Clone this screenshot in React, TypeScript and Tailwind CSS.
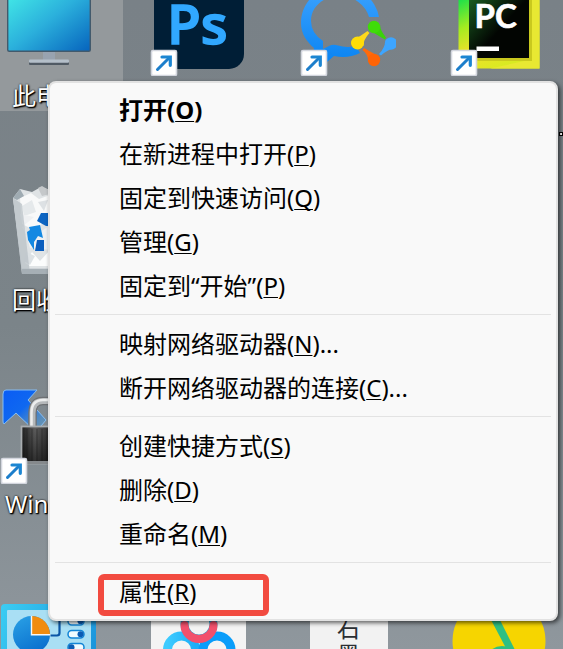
import { ReactNode } from 'react'
import clsx from 'clsx'

interface MenuEntry {
  label: string
  accessKey: string
  suffix?: string
  isDefault?: boolean
  highlighted?: boolean
}

const menuGroups: MenuEntry[][] = [
  [
    { label: '打开', accessKey: 'O', isDefault: true },
    { label: '在新进程中打开', accessKey: 'P' },
    { label: '固定到快速访问', accessKey: 'Q' },
    { label: '管理', accessKey: 'G' },
    { label: '固定到“开始”', accessKey: 'P' },
  ],
  [
    { label: '映射网络驱动器', accessKey: 'N', suffix: '...' },
    { label: '断开网络驱动器的连接', accessKey: 'C', suffix: '...' },
  ],
  [
    { label: '创建快捷方式', accessKey: 'S' },
    { label: '删除', accessKey: 'D' },
    { label: '重命名', accessKey: 'M' },
  ],
  [{ label: '属性', accessKey: 'R', highlighted: true }],
]

function MenuItem({ label, accessKey, suffix, isDefault, highlighted }: MenuEntry) {
  return (
    <button
      type="button"
      role="menuitem"
      className={clsx(
        'relative flex h-11 w-full items-center pb-0.5 pl-[69px] text-left whitespace-nowrap hover:bg-black/5',
        isDefault && 'font-bold'
      )}
    >
      <span>
        {label}(
        <span className="underline decoration-1 underline-offset-2 [text-decoration-skip-ink:none]">{accessKey}</span>
        ){suffix}
      </span>
      {highlighted && (
        <span className="absolute top-[3px] left-12 h-[42px] w-[171px] rounded-md border-[6px] border-[#f24b40]" />
      )}
    </button>
  )
}

function ContextMenu() {
  return (
    <div
      role="menu"
      className="absolute top-[81px] right-[5px] left-12 rounded-lg border-2 border-[#e2e2e2] bg-[#f9f9f9] pt-1.5 pb-1 text-2xl text-black shadow-[2px_2px_4px_rgba(0,0,0,0.6)]"
    >
      {menuGroups.map((group, index) => (
        <div key={index} role="group">
          {index > 0 && <hr className="mx-[5px] mt-[5px] mb-2 border-[#e3e3e3]" />}
          {group.map((entry) => (
            <MenuItem key={entry.label} {...entry} />
          ))}
        </div>
      ))}
    </div>
  )
}

function Icon({ children, shortcut }: { children: ReactNode; shortcut?: boolean }) {
  return (
    <svg viewBox="0 0 96 96" className="size-24 shrink-0" aria-hidden="true">
      {children}
      {shortcut && (
        <g>
          <rect x="1.500" y="70.500" width="25" height="25" rx="1.500" fill="#fff" stroke="#d3d6de" strokeWidth="1.600" />
          <path d="M7.500 89.500 L19 78" stroke="#1c7ecb" strokeWidth="3" strokeLinecap="round" />
          <path d="M12 77 H20.300 V85.300" fill="none" stroke="#1c86d2" strokeWidth="3.200" strokeLinecap="round" />
        </g>
      )}
    </svg>
  )
}

function ThisPcIcon() {
  return (
    <Icon>
      <defs>
        <linearGradient id="screen" x1="0" y1="0" x2="1" y2="1">
          <stop offset="0" stopColor="#45f0e8" />
          <stop offset="0.500" stopColor="#2bb0dc" />
          <stop offset="1" stopColor="#0663bd" />
        </linearGradient>
      </defs>
      <rect x="43" y="71" width="12" height="10" fill="#98a3b0" />
      <rect x="29" y="80" width="40" height="5" rx="1" fill="#505a64" />
      <rect x="29" y="79.500" width="40" height="3.200" rx="1" fill="#b4bfc9" />
      <rect x="7.700" y="8" width="82.600" height="63.300" rx="1.500" fill="url(#screen)" stroke="#435a6c" strokeWidth="1.400" />
    </Icon>
  )
}

function PhotoshopIcon() {
  return (
    <Icon shortcut>
      <rect x="4" y="0" width="90" height="89" rx="15" fill="#001e36" />
      <text
        x="17"
        y="63.500"
        fontSize="55"
        fontWeight="600"
        fill="#31a8ff"
        stroke="#31a8ff"
        strokeWidth="1.600"
        fontFamily="'Open Sans', 'Noto Sans', sans-serif"
      >
        Ps
      </text>
    </Icon>
  )
}

function ChatIcon() {
  return (
    <Icon shortcut>
      <defs>
        <linearGradient id="bubble" x1="0" y1="0" x2="0" y2="1">
          <stop offset="0" stopColor="#3da3ff" />
          <stop offset="1" stopColor="#0a84f2" />
        </linearGradient>
      </defs>
      <path
        d="M79 37 A39 37 0 0 0 40 6 C18 6 1 22 1 43 C1 54 7 62 14 68 L12 82 L27 82 L34 76 Q48 79 60 73 L56 66 Q46 68 38 65.500 Q33 64 29 66 L23 69 L23 61 Q11 53 11 41 C11 27 23 16 40 16 A30 28 0 0 1 69 37Z"
        fill="url(#bubble)"
      />
      <path d="M68.500 49 Q75 54 85 59.500 L86 57.500 Q80 50 80 45Z" fill="#3bd20a" />
      <circle cx="74" cy="47" r="6.200" fill="#3fdc08" />
      <path d="M52 60 Q60 57 67.500 51 L69.500 53 Q63 60 63.500 66Z" fill="#ffd91c" />
      <circle cx="57.500" cy="63" r="6.500" fill="#ffdd08" />
      <path d="M86 59 Q85 68 79 74 L81 75.500 Q87 70 94 68Z" fill="#3da5ff" />
      <circle cx="91" cy="63.500" r="6.200" fill="#3da5ff" />
      <path d="M80 78 Q72 72 64 68 L62.500 70 Q68 74 68.500 82Z" fill="#ff6a0a" />
      <circle cx="74" cy="80" r="6.200" fill="#ff6405" />
    </Icon>
  )
}

function PyCharmIcon() {
  return (
    <Icon shortcut>
      <defs>
        <linearGradient id="pycharm" x1="0" y1="0" x2="0.500" y2="1">
          <stop offset="0.150" stopColor="#12e04c" />
          <stop offset="0.450" stopColor="#a5ec20" />
          <stop offset="0.700" stopColor="#f0e02a" />
          <stop offset="1" stopColor="#d9ea22" />
        </linearGradient>
        <linearGradient id="pycharmCore" x1="0" y1="0" x2="1" y2="1">
          <stop offset="0" stopColor="#1d6a25" />
          <stop offset="0.550" stopColor="#020502" />
        </linearGradient>
      </defs>
      <rect x="8.500" y="2" width="81" height="86.500" fill="url(#pycharm)" />
      <path d="M79 2 H89.500 V88.500 H40 L79 80Z" fill="#e8e832" />
      <rect x="19" y="10" width="63" height="71" fill="#c9c91e" />
      <rect x="19" y="10" width="60" height="68" fill="url(#pycharmCore)" />
      <text x="24.500" y="48" fontSize="33" fontWeight="700" fill="#fff" stroke="#fff" strokeWidth="0.600" fontFamily="Lato, 'Open Sans', sans-serif">
        PC
      </text>
      <rect x="26.500" y="66.500" width="22.500" height="4.500" fill="#fff" />
    </Icon>
  )
}

function RecycleBinIcon() {
  return (
    <Icon>
      <path d="M13 14 L83 14 L74 90 H22Z" fill="#ced3d7" />
      <path d="M13 14 L20 5 L32 8 L41 3 L50 6 L62 4 L83 14 L75 84 H22Z" fill="#dfe3e5" />
      <path d="M20 14 L31 9 L39 15 L50 11 L50 34 L34 46 L22 40Z" fill="#f8f9f9" />
      <path d="M38 4 L42 2 L54 9 L42 12Z" fill="#c5c8ca" />
      <path d="M13 14 L20 5 L24 12 L17 16Z" fill="#9fabb2" />
      <path d="M22 22 L32 16 L36 28 L24 32Z" fill="#e5e9eb" />
      <path d="M38 18 L48 16 L44 27Z" fill="#dde1e4" />
      <path d="M20 30 L34 33 L22 43 L28 54 L40 48 L52 40 V66 L30 64Z" fill="#eef0f2" />
      <path d="M25 79 L32 68 L40 77 L50 66 V82 H30Z" fill="#fbfcfc" />
      <path d="M26 68 L35 72 L30 81 L24 77Z" fill="#dce1e4" />
      <path d="M13 14 L22 90 H30 L22 20Z" fill="#b6bfc5" opacity="0.700" />
      <path d="M22 85 H74 V90 H22Z" fill="#a6afb5" />
      <path d="M37 37 L41 29 H52 V42 H46Z" fill="#0d65c2" />
      <path d="M35 67 L37 56 H44 V67Z" fill="#0b5ebe" />
      <path d="M27 48 L30 46 L29 43 L40 41 L43 54 L38 52 L34 58 L34 66 L28 56Z" fill="#1388e2" />
    </Icon>
  )
}

function WinScpIcon() {
  return (
    <Icon shortcut>
      <defs>
        <linearGradient id="scpArrow" x1="0" y1="0" x2="1" y2="1">
          <stop offset="0" stopColor="#0a5cf5" />
          <stop offset="0.450" stopColor="#0f68f0" />
          <stop offset="0.900" stopColor="#4f9bd0" stopOpacity="0.500" />
        </linearGradient>
        <linearGradient id="lockBody" x1="0" y1="0" x2="1" y2="0">
          <stop offset="0" stopColor="#202020" />
          <stop offset="0.250" stopColor="#5e5e5e" />
          <stop offset="0.500" stopColor="#333" />
          <stop offset="1" stopColor="#555" />
        </linearGradient>
        <linearGradient id="lockShade" x1="0" y1="0" x2="0" y2="1">
          <stop offset="0" stopColor="#000" stopOpacity="0" />
          <stop offset="1" stopColor="#000" stopOpacity="0.500" />
        </linearGradient>
      </defs>
      <path
        d="M6 2 H37 L28 12 L46 32 L36 44 L16 25 L4 36 Q3 36 3 33 V6 Q3 2 6 2Z"
        fill="url(#scpArrow)"
        stroke="#86bdf2"
        strokeWidth="1"
      />
      <path d="M32.500 39 V25 Q32.500 13 43 13 H56 Q66 13 66 25 V39" fill="none" stroke="#6d7073" strokeWidth="8.500" />
      <path d="M32.500 39 V25 Q32.500 13 43 13 H56 Q66 13 66 25 V39" fill="none" stroke="#b5b8ba" strokeWidth="6" />
      <path d="M31.500 39 V25 Q31.500 12 43 12 H56" fill="none" stroke="#eceded" strokeWidth="2.500" />
      <rect x="21.500" y="38.500" width="54" height="37" fill="url(#lockBody)" stroke="#a9adb0" strokeWidth="1.800" />
      <path d="M27 41 V73 M32 41 V73 M37 41 V73 M42 41 V73 M47 41 V73" stroke="#222" strokeWidth="1" opacity="0.500" />
      <rect x="22.500" y="39.500" width="52" height="34" fill="url(#lockShade)" />
      <rect x="20.500" y="73" width="56" height="3" fill="#85898c" />
    </Icon>
  )
}

function ControlPanelIcon() {
  return (
    <Icon>
      <defs>
        <linearGradient id="panelFrame" x1="0" y1="0" x2="1" y2="0.400">
          <stop offset="0" stopColor="#3bcdf3" />
          <stop offset="1" stopColor="#1b96dc" />
        </linearGradient>
        <linearGradient id="pie" x1="0" y1="0" x2="0.500" y2="1">
          <stop offset="0" stopColor="#2ba2e6" />
          <stop offset="1" stopColor="#0b72cf" />
        </linearGradient>
      </defs>
      <rect x="1" y="12" width="96" height="90" rx="4" fill="url(#panelFrame)" />
      <rect x="7" y="18" width="84" height="80" rx="1" fill="#a9dff4" />
      <circle cx="31.500" cy="42.500" r="18.500" fill="url(#pie)" />
      <path d="M32 42.500 V24 A18.500 18.500 0 0 1 50 42.500Z" fill="#f08c10" />
      <path d="M31.500 24 V42.800 H50.500" fill="none" stroke="#f4f7f8" strokeWidth="1.400" />
      <path d="M50.500 43.500 H57 Q59.500 43.500 59.500 41 V26" fill="none" stroke="#0b56a6" strokeWidth="2.200" />
      {[29, 42, 55].map((y) => (
        <rect key={y} x="68" y={y - 3.5} width="16" height="7.500" rx="3.700" fill="#f1fbff" stroke="#1285d6" strokeWidth="1.500" />
      ))}
      <circle cx="80.500" cy="42.300" r="3" fill="#0b5cb4" />
      <circle cx="80.500" cy="29.300" r="3" fill="#0b5cb4" />
      <circle cx="71.500" cy="55.300" r="3" fill="#0b5cb4" />
    </Icon>
  )
}

function NetdiskIcon() {
  return (
    <Icon>
      <defs>
        <linearGradient id="cloudLeft" x1="0" y1="0" x2="1" y2="0">
          <stop offset="0" stopColor="#3ecbff" />
          <stop offset="1" stopColor="#1caef8" />
        </linearGradient>
      </defs>
      <rect x="1" y="0" width="96" height="96" rx="4" fill="#f4f4f4" />
      <circle cx="31.500" cy="58" r="14" fill="none" stroke="url(#cloudLeft)" strokeWidth="9" />
      <circle cx="67" cy="58" r="14" fill="none" stroke="#0a9dfa" strokeWidth="9" />
      <circle cx="49" cy="32" r="14.500" fill="#f4f4f4" stroke="#22a8dc" strokeWidth="8" />
      <path d="M34.500 33 A14.500 14 0 0 0 63.500 33" fill="none" stroke="#f2506c" strokeWidth="8" strokeLinecap="round" />
    </Icon>
  )
}

function InkDocsIcon() {
  return (
    <Icon>
      <rect x="10" y="0" width="78" height="96" fill="#f2f2f2" />
      <g fill="#2b2f33" fontSize="23" fontFamily="'Liberation Serif', 'Noto Sans CJK SC', serif">
        <text x="37" y="45">石</text>
        <text x="37" y="71">墨</text>
      </g>
    </Icon>
  )
}

function MusicIcon() {
  return (
    <Icon>
      <circle cx="49" cy="49" r="46.500" fill="#f6d500" />
      <ellipse cx="52" cy="69" rx="16" ry="15" fill="#2fbf82" />
      <path d="M39 24 H48 L66 60 H58Z" fill="#2fbf82" />
    </Icon>
  )
}

interface DesktopItemProps {
  icon: ReactNode
  label?: string
  selected?: boolean
  className: string
}

function DesktopItem({ icon, label, selected, className }: DesktopItemProps) {
  return (
    <div className={clsx('flex h-[131px] flex-col items-center', selected && 'bg-[#94999c]', className)}>
      {icon}
      {label && (
        <span className="text-2xl leading-10 text-white [text-shadow:1px_1px_2px_#000,0_0_2px_#000,1px_1px_1px_#000]">
          {label}
        </span>
      )}
    </div>
  )
}

export default function App() {
  return (
    <main className="relative h-screen overflow-hidden bg-linear-to-b from-[#798187] via-[#7b8489] to-[#8f979d] font-['Noto_Sans','Noto_Sans_CJK_SC',sans-serif]">
      <div className="-mt-5 -ml-[27px] grid auto-rows-[204px] grid-cols-[repeat(4,150px)]">
        <DesktopItem className="col-start-1 row-start-1" icon={<ThisPcIcon />} label="此电脑" selected />
        <DesktopItem className="col-start-2 row-start-1" icon={<PhotoshopIcon />} />
        <DesktopItem className="col-start-3 row-start-1" icon={<ChatIcon />} />
        <DesktopItem className="col-start-4 row-start-1" icon={<PyCharmIcon />} />
        <DesktopItem className="col-start-1 row-start-2" icon={<RecycleBinIcon />} label="回收站" />
        <DesktopItem className="col-start-1 row-start-3" icon={<WinScpIcon />} label="WinSCP" />
        <DesktopItem className="col-start-1 row-start-4" icon={<ControlPanelIcon />} />
        <DesktopItem className="col-start-2 row-start-4" icon={<NetdiskIcon />} />
        <DesktopItem className="col-start-3 row-start-4" icon={<InkDocsIcon />} />
        <DesktopItem className="col-start-4 row-start-4" icon={<MusicIcon />} />
      </div>
      {/* tail of a clipped icon label */}
      <span className="absolute top-[132px] right-0 size-1 border border-black bg-white" />
      <ContextMenu />
    </main>
  )
}
